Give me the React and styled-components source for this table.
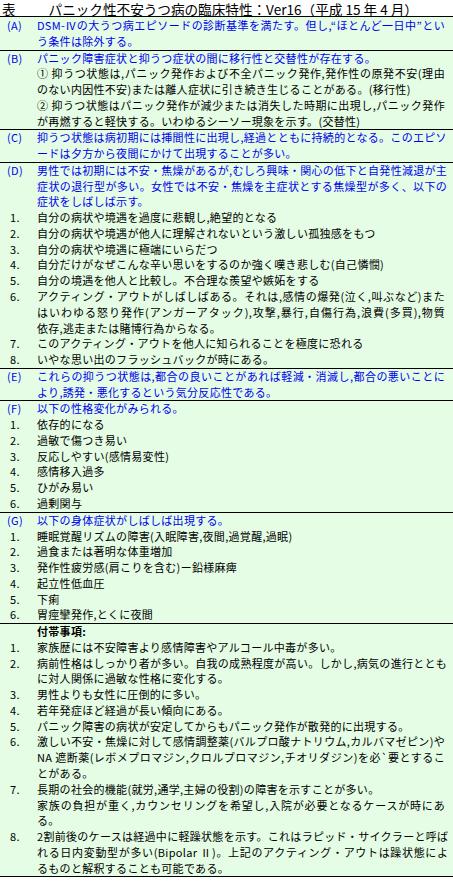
import React from 'react';
import styled, { createGlobalStyle } from 'styled-components';

const GlobalStyle = createGlobalStyle`
	html, body {
		margin: 0;
		padding: 0;
		background: #ffffff;
	}
	body {
		font-family: "Noto Sans CJK JP", "Noto Sans", sans-serif;
	}
`;

const Page = styled.div`
	width: 453px;
	background: #ffffff;
`;

const TitleBar = styled.div`
	display: flex;
	align-items: center;
	gap: 33px;
	padding: 2px 0 0 2px;
	border-bottom: 1.5px solid #000;
	font-size: 13.6px;
	line-height: 14px;
	color: #000;
	white-space: nowrap;
`;

const Table = styled.div`
	padding-top: 1px;
	background: #e4fde4;
`;

const Section = styled.div`
	border-bottom: 1.5px solid #000;
`;

const Row = styled.div`
	display: grid;
	grid-template-columns: 37px 1fr;
	font-size: 11px;
	letter-spacing: 0.3px;
	line-height: 15.76px;
`;

const Label = styled.div`
	padding-left: ${(p) => (p.$num ? '10px' : '7px')};
	color: ${(p) => (p.$blue ? '#0000ee' : '#000')};
	white-space: nowrap;
`;

const Body = styled.div`
	padding-right: 8px;
	color: ${(p) => (p.$blue ? '#0000ee' : '#000')};
	font-weight: ${(p) => (p.$bold ? 700 : 400)};
`;

const Line = styled.span`
	display: block;
	white-space: nowrap;
	text-align: ${(p) => (p.$full ? 'justify' : 'left')};
	text-align-last: ${(p) => (p.$full ? 'justify' : 'left')};
`;

const sections = [
	[
		{ label: '(A)', blue: true, lines: ['DSM-Ⅳの大うつ病エピソードの診断基準を満たす。但し,“ほとんど一日中”とい', 'う条件は除外する。'] },
	],
	[
		{ label: '(B)', blue: true, lines: ['パニック障害症状と抑うつ症状の間に移行性と交替性が存在する。'] },
		{ lines: ['① 抑うつ状態は,パニック発作および不全パニック発作,発作性の原発不安(理由', 'のない内因性不安)または離人症状に引き続き生じることがある。(移行性)'] },
		{ lines: ['② 抑うつ状態はパニック発作が減少または消失した時期に出現し,パニック発作', 'が再燃すると軽快する。いわゆるシーソー現象を示す。(交替性)'] },
	],
	[
		{ label: '(C)', blue: true, lines: ['抑うつ状態は病初期には挿間性に出現し,経過とともに持続的となる。このエピソ', 'ードは夕方から夜間にかけて出現することが多い。'] },
	],
	[
		{ label: '(D)', blue: true, lines: ['男性では初期には不安・焦燥があるが,むしろ興味・関心の低下と自発性減退が主', '症状の退行型が多い。女性では不安・焦燥を主症状とする焦燥型が多く、以下の', '症状をしばしば示す。'] },
		{ label: '1.', lines: ['自分の病状や境遇を過度に悲観し,絶望的となる'] },
		{ label: '2.', lines: ['自分の病状や境遇が他人に理解されないという激しい孤独感をもつ'] },
		{ label: '3.', lines: ['自分の病状や境遇に極端にいらだつ'] },
		{ label: '4.', lines: ['自分だけがなぜこんな辛い思いをするのか強く嘆き悲しむ(自己憐憫)'] },
		{ label: '5.', lines: ['自分の境遇を他人と比較し。不合理な羨望や嫉妬をする'] },
		{ label: '6.', lines: ['アクティング・アウトがしばしばある。それは,感情の爆発(泣く,叫ぶなど)また', 'はいわゆる怒り発作(アンガーアタック),攻撃,暴行,自傷行為,浪費(多買),物質', '依存,逃走または賭博行為からなる。'] },
		{ label: '7.', lines: ['このアクティング・アウトを他人に知られることを極度に恐れる'] },
		{ label: '8.', lines: ['いやな思い出のフラッシュバックが時にある。'] },
	],
	[
		{ label: '(E)', blue: true, lines: ['これらの抑うつ状態は,都合の良いことがあれば軽減・消滅し,都合の悪いことに', 'より,誘発・悪化するという気分反応性である。'] },
	],
	[
		{ label: '(F)', blue: true, lines: ['以下の性格変化がみられる。'] },
		{ label: '1.', lines: ['依存的になる'] },
		{ label: '2.', lines: ['過敏で傷つき易い'] },
		{ label: '3.', lines: ['反応しやすい(感情易変性)'] },
		{ label: '4.', lines: ['感情移入過多'] },
		{ label: '5.', lines: ['ひがみ易い'] },
		{ label: '6.', lines: ['過剰関与'] },
	],
	[
		{ label: '(G)', blue: true, lines: ['以下の身体症状がしばしば出現する。'] },
		{ label: '1.', lines: ['睡眠覚醒リズムの障害(入眠障害,夜間,過覚醒,過眠)'] },
		{ label: '2.', lines: ['過食または著明な体重増加'] },
		{ label: '3.', lines: ['発作性疲労感(肩こりを含む)ー鉛様麻痺'] },
		{ label: '4.', lines: ['起立性低血圧'] },
		{ label: '5.', lines: ['下痢'] },
		{ label: '6.', lines: ['胃痙攣発作,とくに夜間'] },
	],
	[
		{ bold: true, lines: ['付帯事項:'] },
		{ label: '1.', lines: ['家族歴には不安障害より感情障害やアルコール中毒が多い。'] },
		{ label: '2.', lines: ['病前性格はしっかり者が多い。自我の成熟程度が高い。しかし,病気の進行ととも', 'に対人関係に過敏な性格に変化する。'] },
		{ label: '3.', lines: ['男性よりも女性に圧倒的に多い。'] },
		{ label: '4.', lines: ['若年発症ほど経過が長い傾向にある。'] },
		{ label: '5.', lines: ['パニック障害の病状が安定してからもパニック発作が散発的に出現する。'] },
		{ label: '6.', lines: ['激しい不安・焦燥に対して感情調整薬(バルプロ酸ナトリウム,カルバマゼピン)や', 'NA 遮断薬(レボメプロマジン,クロルプロマジン,チオリダジン)を必`要とするこ', 'とがある。'] },
		{ label: '7.', lines: ['長期の社会的機能(就労,通学,主婦の役割)の障害を示すことが多い。'] },
		{ lines: ['家族の負担が重く,カウンセリングを希望し,入院が必要となるケースが時にあ', 'る。'] },
		{ label: '8.', lines: ['2割前後のケースは経過中に軽躁状態を示す。これはラピッド・サイクラーと呼ば', 'れる日内変動型が多い(Bipolar Ⅱ)。上記のアクティング・アウトは躁状態によ', 'るものと解釈することも可能である。'] },
	],
];

const App = () => {
	return (
		<Page>
			<GlobalStyle />
			<TitleBar>
				<span>表</span>
				<span>パニック性不安うつ病の臨床特性：Ver16（平成 15 年 4 月）</span>
			</TitleBar>
			<Table>
				{sections.map((rows, si) => (
					<Section key={si}>
						{rows.map((r, ri) => (
							<Row key={ri}>
								<Label $blue={r.blue} $num={r.label && !r.blue}>
									{r.label || ''}
								</Label>
								<Body $blue={r.blue} $bold={r.bold}>
									{r.lines.map((l, li) => (
										<Line key={li} $full={li < r.lines.length - 1}>
											{l}
										</Line>
									))}
								</Body>
							</Row>
						))}
					</Section>
				))}
			</Table>
		</Page>
	);
};

export default App;
